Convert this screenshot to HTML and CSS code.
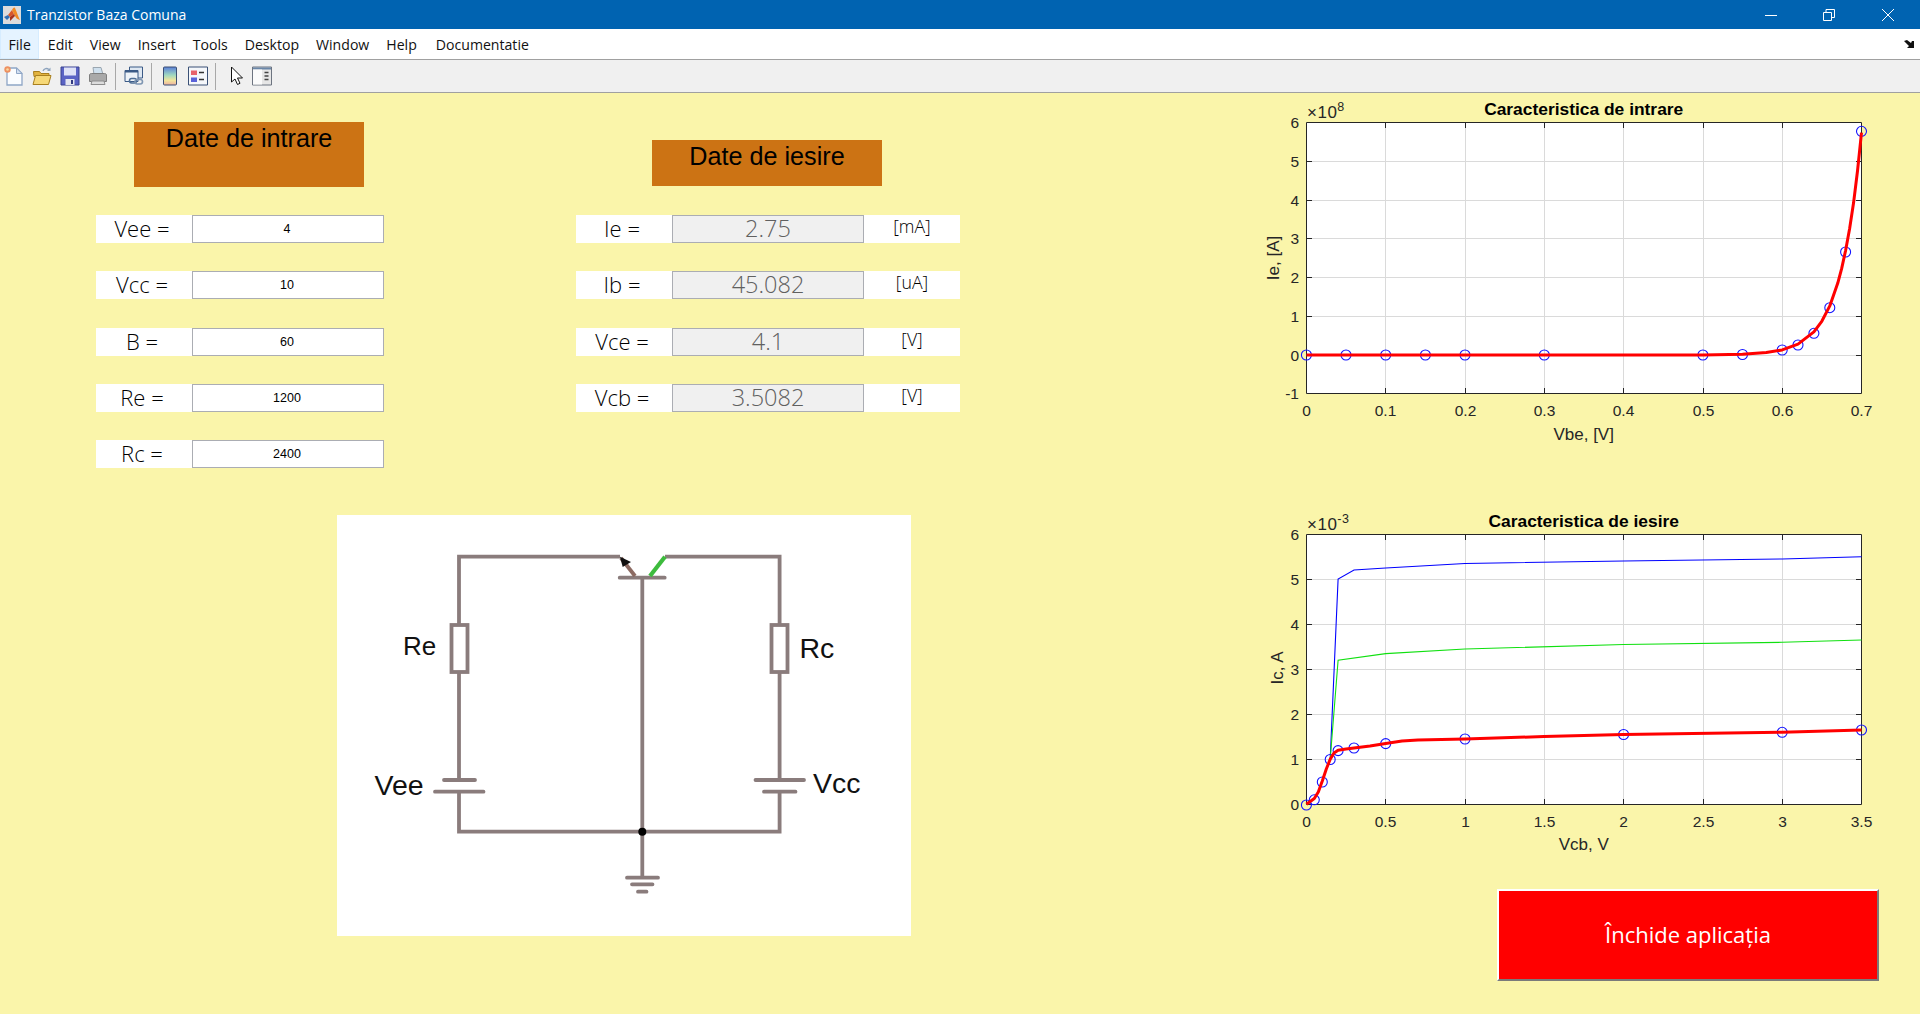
FILE: index.html
```html
<!DOCTYPE html>
<html lang="en">
  <head>
    <meta charset="UTF-8" />
    <title>Tranzistor Baza Comuna</title>
    <link rel="stylesheet" href="styles.css">
  </head>
  <body>
    <div class="titlebar">
      <svg class="app-icon" viewBox="0 0 18 18">
        <rect width="18" height="18" fill="#dcdcdc" />
        <path d="M1 11l4-2 2 2-3 3z" fill="#2f6fb5" />
        <path d="M5 9l4-5 2 4-4 3z" fill="#d8572a" />
        <path d="M9 4c1-2 2-3 3-2 1 2 3 8 5 12-3-1-4-2-5-4l-1-2z" fill="#f08a24" />
        <path d="M7 11l4-3 1 2c-2 2-3 3-5 5z" fill="#a8321c" />
      </svg>
      <span class="app-title">Tranzistor Baza Comuna</span>
      <div class="win-controls">
        <div class="win-btn">
          <svg width="14" height="14" viewBox="0 0 14 14"><path d="M1 7.500h12" stroke="#fff" fill="none" /></svg>
        </div>
        <div class="win-btn">
          <svg width="14" height="14" viewBox="0 0 14 14"><path d="M1.500 4.500h8v8h-8zM4 4.500V1.500h8.500v8h-3" stroke="#fff" fill="none" /></svg>
        </div>
        <div class="win-btn">
          <svg width="14" height="14" viewBox="0 0 14 14"><path d="M1 1l12 12M13 1L1 13" stroke="#fff" fill="none" /></svg>
        </div>
      </div>
    </div>

    <div class="menubar">
      <span class="menu-item menu-active">File</span>
      <span class="menu-item">Edit</span>
      <span class="menu-item">View</span>
      <span class="menu-item">Insert</span>
      <span class="menu-item">Tools</span>
      <span class="menu-item">Desktop</span>
      <span class="menu-item">Window</span>
      <span class="menu-item">Help</span>
      <span class="menu-item menu-custom">Documentatie</span>
      <svg class="dock-arrow" width="11" height="8" viewBox="0 0 11 8">
        <path d="M0 1l3-1 4 3 1-2 2 0v7H3l2-2z" fill="#111" />
      </svg>
    </div>

    <div class="toolbar">
      <div class="tool">
        <svg viewBox="0 0 20 20">
          <path d="M3 2h9.500l5.500 5.500V19H3z" fill="#fbfdff" stroke="#8fa6c6" stroke-width="1.300" />
          <path d="M12.500 2v5.500H18z" fill="#d3e0f2" stroke="#8fa6c6" />
          <circle cx="3.500" cy="3.500" r="3.200" fill="#ee9060" />
          <circle cx="3.500" cy="3.500" r="1.300" fill="#f7d9a0" />
        </svg>
      </div>
      <div class="tool">
        <svg viewBox="0 0 20 20">
          <path d="M1.500 5.500h6l1.500 2h8v3h-15z" fill="#e2b33f" stroke="#a97f1e" />
          <path d="M1 18.500l2.500-9h15.500l-2.500 9z" fill="#f6d877" stroke="#a97f1e" />
          <path d="M11 5c1-3 4-3 6-1.500" fill="none" stroke="#8da3bd" stroke-width="1.300" />
          <path d="M18.500 1.500v3.500h-3.500z" fill="#8da3bd" />
        </svg>
      </div>
      <div class="tool">
        <svg viewBox="0 0 20 20">
          <path d="M1 1h18v18H1z" fill="#5a63c4" stroke="#3b4390" />
          <path d="M4 1.500h12v8H4z" fill="#dfe2f6" />
          <path d="M5.500 13h9v6h-9z" fill="#e4e6f0" />
          <path d="M11 14h2v4h-2z" fill="#31397f" />
        </svg>
      </div>
      <div class="tool">
        <svg viewBox="0 0 20 20">
          <path d="M5 1.500h8l2 7H6z" fill="#cfe0ee" stroke="#9aa6b0" />
          <path d="M1.500 9c0-1 1-1.500 2-1.500h13c1 0 2 .5 2 1.500v6.500h-17z" fill="#a9a9a9" stroke="#7f7f7f" />
          <path d="M4 15h12l1 3.500H3z" fill="#dcdcdc" stroke="#8d8d8d" />
        </svg>
      </div>
      <div class="tool-sep"></div>
      <div class="tool">
        <svg viewBox="0 0 20 20">
          <path d="M5.500 1h13v11h-13z" fill="#dfe8f2" stroke="#3b5a86" />
          <path d="M1 4.500h13v11H1z" fill="#eef3f8" stroke="#3b5a86" />
          <path d="M1 4.500h13v2H1z" fill="#3b5a86" />
          <rect x="5.500" y="12.500" width="7" height="4.500" rx="2.200" fill="none" stroke="#4f6f96" stroke-width="1.600" />
          <rect x="11" y="13.500" width="7.500" height="4.500" rx="2.200" fill="none" stroke="#7f96b2" stroke-width="1.600" />
        </svg>
      </div>
      <div class="tool-sep"></div>
      <div class="tool">
        <svg viewBox="0 0 20 20">
          <defs>
            <linearGradient id="bar-fill" x1="0" y1="0" x2="0" y2="1">
              <stop offset="0" stop-color="#5b7fd8" />
              <stop offset=".45" stop-color="#9fd8c0" />
              <stop offset=".75" stop-color="#f2e49a" />
              <stop offset="1" stop-color="#eeb0a0" />
            </linearGradient>
          </defs>
          <rect x="3.500" y="1" width="13" height="18" rx="1" fill="url(#bar-fill)" stroke="#3b4f72" />
        </svg>
      </div>
      <div class="tool">
        <svg viewBox="0 0 20 20">
          <path d="M.5 1h19v18H.5z" fill="#f5f7fa" stroke="#3b5176" />
          <path d="M3 4.500h6v4.500H3z" fill="#e8636a" />
          <path d="M3 11.500h6V16H3z" fill="#5a62d8" />
          <path d="M11 6.500h5M11 13.500h5" stroke="#333" stroke-width="1.500" />
        </svg>
      </div>
      <div class="tool-sep"></div>
      <div class="tool tool-cursor">
        <svg viewBox="0 0 20 20">
          <path d="M5.500 1v15l3.500-3 2.500 5.500 2.500-1.200-2.500-5.300h5z" fill="#fff" stroke="#111" />
        </svg>
      </div>
      <div class="tool">
        <svg viewBox="0 0 20 20">
          <path d="M.5 1h19v18H.5z" fill="#e6e6e6" stroke="#6d7480" />
          <path d="M1 1.500h18v2H1z" fill="#6b87a8" />
          <path d="M1 3.500h9V18.500H1z" fill="#fbfbfb" />
          <path d="M12.500 6.500h4M12.500 10h4M12.500 13.500h4" stroke="#444" stroke-width="1.400" />
        </svg>
      </div>
    </div>

    <div class="workspace">
      <div class="left-side">
        <div class="forms">
          <div class="panel-in">
            <div class="heading heading-tall">Date de intrare</div>
            <div class="rows">
              <div class="row"><div class="name">Vee =</div><div class="field">4</div></div>
              <div class="row"><div class="name">Vcc =</div><div class="field">10</div></div>
              <div class="row row-low"><div class="name">B =</div><div class="field">60</div></div>
              <div class="row"><div class="name">Re =</div><div class="field">1200</div></div>
              <div class="row"><div class="name">Rc =</div><div class="field">2400</div></div>
            </div>
          </div>
          <div class="panel-out">
            <div class="heading heading-low">Date de iesire</div>
            <div class="rows">
              <div class="row"><div class="name">Ie =</div><div class="result">2.75</div><div class="unit">[mA]</div></div>
              <div class="row"><div class="name">Ib =</div><div class="result">45.082</div><div class="unit">[uA]</div></div>
              <div class="row row-low"><div class="name">Vce =</div><div class="result">4.1</div><div class="unit">[V]</div></div>
              <div class="row"><div class="name">Vcb =</div><div class="result">3.5082</div><div class="unit">[V]</div></div>
            </div>
          </div>
        </div>

        <svg class="circuit" viewBox="337 515 574 421">
          <path class="wire" d="M620 556.700H459V624M459 673V780M459 792V831.700H779.600V792M779.600 780V673M779.600 624V556.700H665M642.300 577.700V877.700" />
          <rect class="wire" x="451.500" y="625" width="16" height="47" />
          <rect class="wire" x="771.500" y="625" width="16" height="47" />
          <path class="wire wire-round" d="M444 780h31M435 791.700h48.500M755.500 780h48.500M764 791.700h31.500M619.700 577.700h45M627 877.700h31M632 884.300h20.500M638 891.700h8.500" />
          <path class="emitter" d="M621 558L635 576" />
          <path class="collector" d="M650 576L665 556.700" />
          <path d="M620 556.700L622.700 567 631 562z" fill="#111" />
          <circle cx="642.300" cy="831.700" r="4" fill="#000" />
          <text class="circuit-label" x="403" y="655">Re</text>
          <text class="circuit-label circuit-label-lg" x="799.500" y="657.500">Rc</text>
          <text class="circuit-label circuit-label-lg" x="374.500" y="795">Vee</text>
          <text class="circuit-label circuit-label-lg" x="813" y="793">Vcc</text>
        </svg>
      </div>

      <div class="right-side">
        <svg class="plot" viewBox="1250 100 650 360">
          <rect class="plot-bg" x="1306.500" y="122.500" width="555" height="271" />
          <path class="grid" d="M1385.500 123V393M1465.500 123V393M1544.500 123V393M1623.500 123V393M1703.500 123V393M1782.500 123V393M1307 161.500H1861M1307 200.500H1861M1307 238.500H1861M1307 277.500H1861M1307 316.500H1861M1307 355.500H1861" />
          <path class="axis" d="M1306.500 122.500H1861.500V393.500H1306.500z" />
          <path class="axis" d="M1385.500 123v5M1465.500 123v5M1544.500 123v5M1623.500 123v5M1703.500 123v5M1782.500 123v5M1385.500 393v-5M1465.500 393v-5M1544.500 393v-5M1623.500 393v-5M1703.500 393v-5M1782.500 393v-5M1307 161.500h5M1307 200.500h5M1307 238.500h5M1307 277.500h5M1307 316.500h5M1307 355.500h5M1861 161.500h-5M1861 200.500h-5M1861 238.500h-5M1861 277.500h-5M1861 316.500h-5M1861 355.500h-5" />
          <g class="circles">
            <circle cx="1306.400" cy="355" r="5" /><circle cx="1346" cy="355" r="5" /><circle cx="1385.700" cy="355" r="5" /><circle cx="1425.400" cy="355" r="5" /><circle cx="1465" cy="355" r="5" /><circle cx="1544.300" cy="355" r="5" /><circle cx="1702.900" cy="355" r="5" /><circle cx="1742.500" cy="354.500" r="5" /><circle cx="1782.200" cy="350" r="5" /><circle cx="1798" cy="345" r="5" /><circle cx="1813.900" cy="333.300" r="5" /><circle cx="1829.800" cy="307.700" r="5" /><circle cx="1845.600" cy="252" r="5" /><circle cx="1861.500" cy="131.300" r="5" />
          </g>
          <polyline class="fit" points="1306.400,355 1702.900,354.900 1742.500,354.200 1766.300,352.600 1782.200,349.900 1798,344.100 1813.900,331.900 1821.800,321.300 1829.800,305.900 1837.700,283.300 1841.700,268.400 1845.600,250.500 1849.600,228.800 1853.600,202.600 1857.500,171 1861.500,132.700" />
          <g class="ticks">
            <text x="1306.500" y="415.500">0</text><text x="1385.500" y="415.500">0.1</text><text x="1465.500" y="415.500">0.2</text><text x="1544.500" y="415.500">0.3</text><text x="1623.500" y="415.500">0.4</text><text x="1703.500" y="415.500">0.5</text><text x="1782.500" y="415.500">0.6</text><text x="1861.500" y="415.500">0.7</text>
          </g>
          <g class="ticks ticks-y">
            <text x="1299" y="128">6</text><text x="1299" y="167">5</text><text x="1299" y="206">4</text><text x="1299" y="244">3</text><text x="1299" y="283">2</text><text x="1299" y="322">1</text><text x="1299" y="361">0</text><text x="1299" y="399">-1</text>
          </g>
          <text class="exponent" x="1307" y="117.500">×10<tspan class="exponent-sup" dy="-7">8</tspan></text>
          <text class="plot-title" x="1583.700" y="115">Caracteristica de intrare</text>
          <text class="axis-label" x="1583.700" y="440">Vbe, [V]</text>
          <text class="axis-label" transform="translate(1279 258) rotate(-90)">Ie, [A]</text>
        </svg>

        <svg class="plot" viewBox="1250 500 650 360">
          <rect class="plot-bg" x="1306.500" y="534.500" width="555" height="270" />
          <path class="grid" d="M1385.500 535V804M1465.500 535V804M1544.500 535V804M1623.500 535V804M1703.500 535V804M1782.500 535V804M1307 579.500H1861M1307 624.500H1861M1307 669.500H1861M1307 714.500H1861M1307 759.500H1861" />
          <path class="axis" d="M1306.500 534.500H1861.500V804.500H1306.500z" />
          <path class="axis" d="M1385.500 535v5M1465.500 535v5M1544.500 535v5M1623.500 535v5M1703.500 535v5M1782.500 535v5M1385.500 804v-5M1465.500 804v-5M1544.500 804v-5M1623.500 804v-5M1703.500 804v-5M1782.500 804v-5M1307 579.500h5M1307 624.500h5M1307 669.500h5M1307 714.500h5M1307 759.500h5M1861 579.500h-5M1861 624.500h-5M1861 669.500h-5M1861 714.500h-5M1861 759.500h-5" />
          <polyline class="line-blue" points="1330.200,759.300 1338.100,579 1354,570 1385.700,568 1465,563.500 1623.600,561 1782.200,559 1861.500,556.800" />
          <polyline class="line-green" points="1330.200,759.300 1338.100,660.300 1385.700,653.600 1465,649 1623.600,644.500 1782.200,642.300 1861.500,640" />
          <g class="circles">
            <circle cx="1306.400" cy="805" r="5" /><circle cx="1314.300" cy="799.800" r="5" /><circle cx="1322.300" cy="782" r="5" /><circle cx="1330.200" cy="759.500" r="5" /><circle cx="1338.100" cy="750.600" r="5" /><circle cx="1354" cy="748" r="5" /><circle cx="1385.700" cy="743.600" r="5" /><circle cx="1465" cy="739" r="5" /><circle cx="1623.600" cy="734.500" r="5" /><circle cx="1782.200" cy="732.300" r="5" /><circle cx="1861.500" cy="730" r="5" />
          </g>
          <polyline class="fit" points="1306.400,804.300 1314.300,798.500 1318.300,792 1322.300,781 1326.300,769 1330.200,759.300 1334,753 1338.100,750.300 1346,749 1354,748 1370,746 1385.700,743.400 1402,741 1418,740 1465,739 1544,736.500 1623.600,734.500 1782.200,732.300 1861.500,730" />
          <g class="ticks">
            <text x="1306.500" y="826.500">0</text><text x="1385.500" y="826.500">0.5</text><text x="1465.500" y="826.500">1</text><text x="1544.500" y="826.500">1.5</text><text x="1623.500" y="826.500">2</text><text x="1703.500" y="826.500">2.5</text><text x="1782.500" y="826.500">3</text><text x="1861.500" y="826.500">3.5</text>
          </g>
          <g class="ticks ticks-y">
            <text x="1299" y="540">6</text><text x="1299" y="585">5</text><text x="1299" y="630">4</text><text x="1299" y="675">3</text><text x="1299" y="720">2</text><text x="1299" y="765">1</text><text x="1299" y="810">0</text>
          </g>
          <text class="exponent" x="1307" y="530">×10<tspan class="exponent-sup" dy="-7">-3</tspan></text>
          <text class="plot-title" x="1583.700" y="526.500">Caracteristica de iesire</text>
          <text class="axis-label" x="1583.700" y="850">Vcb, V</text>
          <text class="axis-label" transform="translate(1283 668) rotate(-90)">Ic, A</text>
        </svg>

        <button class="close-btn">Închide aplicația</button>
      </div>
    </div>
  </body>
</html>
```

FILE: styles.css
```css
* {
  box-sizing: border-box;
}
html,
body {
  height: 100%;
}
body {
  margin: 0;
  display: flex;
  flex-direction: column;
  background: #faf5aa;
  font-family: "Open Sans", sans-serif;
  overflow: hidden;
}

/* window chrome */
.titlebar {
  height: 29px;
  background: #0063b1;
  color: #fff;
  display: flex;
  align-items: center;
  padding-left: 3px;
}
.app-icon {
  width: 18px;
  height: 18px;
}
.app-title {
  margin-left: 6px;
  font-size: 14px;
}
.win-controls {
  margin-left: auto;
  display: flex;
  padding-right: 3px;
}
.win-btn {
  width: 58.5px;
  height: 29px;
  display: flex;
  align-items: center;
  justify-content: center;
}
.menubar {
  height: 31px;
  background: #fff;
  border-bottom: 1px solid #a0a0a0;
  display: flex;
  align-items: center;
  font-size: 14.1px;
  color: #111;
}
.menu-item {
  padding: 0 8.5px;
  height: 30px;
  line-height: 31px;
}
.menu-active {
  background: #e5f3ff;
  box-shadow: inset 0 0 0 1px #d6ecff;
}
.menu-custom {
  margin-left: 2px;
}
.dock-arrow {
  margin-left: auto;
  margin-right: 5px;
}
.toolbar {
  height: 33px;
  background: #f0f0f0;
  border-bottom: 1px solid #a0a0a0;
  display: flex;
  align-items: center;
}
.tool {
  width: 28px;
  height: 20px;
  display: flex;
  justify-content: center;
}
.tool svg {
  width: 20px;
  height: 20px;
}
.tool-cursor {
  margin-left: 2px;
  margin-right: -2px;
}
.tool-sep {
  width: 1px;
  height: 27px;
  background: #a8a8a8;
  margin: 0 4px 0 3px;
}

/* main figure */
.workspace {
  flex: 1;
  display: flex;
  padding-left: 96px;
}
.left-side {
  width: 864px;
}
.forms {
  display: flex;
  gap: 192px;
}
.panel-in {
  width: 288px;
  padding-top: 29px;
}
.panel-out {
  width: 384px;
  padding-top: 47px;
}
.heading {
  width: 230px;
  background: #cc7314;
  color: #000;
  font-family: "Liberation Sans", sans-serif;
  font-size: 25.200px;
  text-align: center;
}
.heading-tall {
  height: 65px;
  margin-left: 38px;
  margin-bottom: 28px;
  line-height: 32px;
}
.heading-low {
  height: 46px;
  margin-left: 76px;
  margin-bottom: 29px;
  line-height: 32px;
}
.rows {
  display: flex;
  flex-direction: column;
  gap: 28px;
}
.row {
  height: 28px;
  display: flex;
  background: #fff;
}
.row-low {
  margin-top: 1px;
}
.name {
  width: 96px;
  padding-right: 4px;
  font-size: 22px;
  font-weight: 300;
  line-height: 26px;
  text-align: center;
  color: #000;
}
.field,
.result {
  width: 192px;
  border: 1px solid #abadb3;
  text-align: center;
}
.field {
  background: #fff;
  padding-right: 2px;
  font-family: "Liberation Sans", sans-serif;
  font-size: 12.500px;
  line-height: 27px;
  color: #000;
}
.result {
  background: #f0f0f0;
  font-size: 23.500px;
  font-weight: 300;
  line-height: 24px;
  color: #606060;
}
.unit {
  width: 96px;
  font-size: 17.700px;
  font-weight: 300;
  line-height: 22px;
  text-align: center;
  color: #000;
}

.circuit {
  display: block;
  width: 574px;
  height: 421px;
  margin: 47px 0 0 241px;
  background: #fff;
}
.circuit-label {
  font-family: "Liberation Sans", sans-serif;
  font-size: 26px;
  fill: #111;
}
.circuit-label-lg {
  font-size: 28.500px;
}
.wire {
  fill: none;
  stroke: #8a7c7c;
  stroke-width: 3.800;
}
.wire-round {
  stroke-linecap: round;
}
.emitter {
  fill: none;
  stroke: #8c6a62;
  stroke-width: 3.800;
}
.collector {
  fill: none;
  stroke: #3dbb3d;
  stroke-width: 4.200;
}

/* charts */
.right-side {
  margin-left: 290px;
  width: 650px;
  padding-top: 7px;
}
.plot {
  display: block;
  width: 650px;
  height: 360px;
  margin-bottom: 40px;
}
.plot-bg {
  fill: #fff;
}
.grid {
  fill: none;
  stroke: #dadada;
}
.axis {
  fill: none;
  stroke: #262626;
}
.circles circle {
  fill: none;
  stroke: #1414ff;
  stroke-width: 1.100;
}
.fit {
  fill: none;
  stroke: #f00;
  stroke-width: 3;
  stroke-linejoin: round;
}
.line-blue {
  fill: none;
  stroke: #0000ff;
  stroke-width: 1.100;
}
.line-green {
  fill: none;
  stroke: #10e010;
  stroke-width: 1.100;
}
.ticks text,
.exponent,
.axis-label {
  font-family: "Liberation Sans", sans-serif;
  fill: #262626;
}
.ticks text {
  font-size: 15.500px;
  text-anchor: middle;
}
.ticks-y text {
  text-anchor: end;
}
.exponent {
  font-size: 17px;
  letter-spacing: .5px;
}
.exponent-sup {
  font-size: 12.500px;
}
.plot-title {
  font-family: "Liberation Sans", sans-serif;
  font-size: 17.400px;
  font-weight: bold;
  text-anchor: middle;
  fill: #000;
}
.axis-label {
  font-size: 17px;
  text-anchor: middle;
}
.close-btn {
  display: block;
  width: 382px;
  height: 92px;
  margin: -11px 0 0 247px;
  padding: 0 0 3px;
  background: #f00;
  color: #fff;
  border: 2px solid;
  border-color: #fff #7a7a7a #7a7a7a #fff;
  font-family: "Open Sans", sans-serif;
  font-size: 22px;
}
```
